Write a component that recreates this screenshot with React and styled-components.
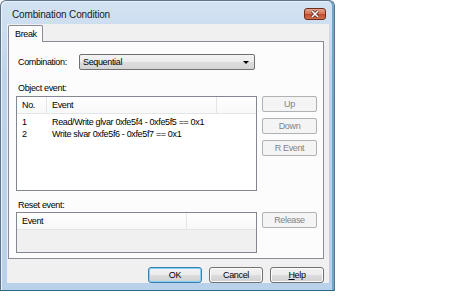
import styled, { createGlobalStyle } from "styled-components";

const GlobalStyle = createGlobalStyle`
  body {
    margin: 0;
    background: #ffffff;
    font-family: "Liberation Sans", Arial, sans-serif;
    font-size: 9px;
    letter-spacing: -0.35px;
    color: #000000;
  }
`;

export default function App() {
  return (
    <>
      <GlobalStyle />
      <Window>
        <TitleBar>
          <Title>Combination Condition</Title>
          <CloseButton>
            <svg width="10" height="8" viewBox="0 0 10 8">
              <path d="M2 1 L8 7 M8 1 L2 7" stroke="#5a2316" strokeWidth="3" />
              <path d="M2 1 L8 7 M8 1 L2 7" stroke="#ffffff" strokeWidth="1.6" />
            </svg>
          </CloseButton>
        </TitleBar>
        <Client>
          <TabStrip>
            <Tab>Break</Tab>
          </TabStrip>
          <Panel>
            <ComboRow>
              <Label>Combination:</Label>
              <Select>
                <span>Sequential</span>
                <Arrow />
              </Select>
            </ComboRow>
            <Caption>Object event:</Caption>
            <ListRow>
              <ListView height={95}>
                <Header>
                  <HeadCell width={30}>No.</HeadCell>
                  <HeadCell width={170}>Event</HeadCell>
                  <HeadFill />
                </Header>
                <Rows>
                  <Row>
                    <Cell width={30}>1</Cell>
                    <Cell>Read/Write glvar 0xfe5f4 - 0xfe5f5 == 0x1</Cell>
                  </Row>
                  <Row>
                    <Cell width={30}>2</Cell>
                    <Cell>Write slvar 0xfe5f6 - 0xfe5f7 == 0x1</Cell>
                  </Row>
                </Rows>
              </ListView>
              <ButtonCol>
                <SideButton>Up</SideButton>
                <SideButton>Down</SideButton>
                <SideButton>R Event</SideButton>
              </ButtonCol>
            </ListRow>
            <Caption $reset>Reset event:</Caption>
            <ListRow>
              <ListView height={41} $disabled>
                <Header>
                  <HeadCell width={170}>Event</HeadCell>
                  <HeadFill />
                </Header>
              </ListView>
              <ButtonCol>
                <SideButton>Release</SideButton>
              </ButtonCol>
            </ListRow>
          </Panel>
          <Footer>
            <DialogButton $default>OK</DialogButton>
            <DialogButton>Cancel</DialogButton>
            <DialogButton>
              <u>H</u>elp
            </DialogButton>
          </Footer>
        </Client>
      </Window>
    </>
  );
}

const Window = styled.div`
  width: 335px;
  height: 291px;
  box-sizing: border-box;
  border: 1px solid #5d7489;
  border-bottom-color: #2e6a88;
  border-radius: 6px 6px 0 0;
  background: linear-gradient(#d4e3f3, #bfd4eb 25%, #b9d1ea 100%);
  box-shadow: inset -2px 0 0 #6fa8cc, inset 1px 1px 0 #e9f1fa;
  padding: 0 5px 7px 6px;
  display: flex;
  flex-direction: column;
`;

const TitleBar = styled.div`
  height: 23px;
  display: flex;
  justify-content: space-between;
  align-items: flex-start;
`;

const Title = styled.div`
  font-size: 10px;
  letter-spacing: -0.15px;
  color: #1a1a1a;
  margin: 8px 0 0 5px;
  line-height: 12px;
`;

const CloseButton = styled.div`
  width: 22px;
  height: 12px;
  box-sizing: border-box;
  margin: 7px 3px 0 0;
  border: 1px solid #6e2c1d;
  border-radius: 3px;
  background: linear-gradient(#e3a58f, #d47458 45%, #c24b2c 55%, #d0704f);
  display: flex;
  align-items: center;
  justify-content: center;
`;

const Client = styled.div`
  flex: 1;
  background: #f0f0f0;
  padding: 1px 5px 0 1px;
  display: flex;
  flex-direction: column;
`;

const TabStrip = styled.div`
  height: 16px;
  display: flex;
  position: relative;
  z-index: 1;
`;

const Tab = styled.div`
  width: 35px;
  height: 17px;
  box-sizing: border-box;
  border: 1px solid #898c95;
  border-bottom: none;
  border-radius: 2px 2px 0 0;
  background: #fcfcfc;
  padding: 2px 0 0 6px;
  line-height: 12px;
`;

const Panel = styled.div`
  height: 218px;
  box-sizing: border-box;
  border: 1px solid #898c95;
  background: #fcfcfc;
  padding: 12px 6px 0 7px;
  display: flex;
  flex-direction: column;
`;

const ComboRow = styled.div`
  display: flex;
  align-items: center;
  width: 241px;
`;

const Label = styled.span`
  width: 63px;
  padding-left: 2px;
  box-sizing: border-box;
`;

const Select = styled.div`
  width: 176px;
  height: 16px;
  box-sizing: border-box;
  border: 1px solid #707070;
  border-radius: 2px;
  background: linear-gradient(#f3f3f3, #ebebeb 50%, #dddddd 51%, #d4d4d4);
  display: flex;
  align-items: center;
  justify-content: space-between;
  padding: 0 5px 0 3px;
`;

const Arrow = styled.span`
  width: 0;
  height: 0;
  border-left: 3px solid transparent;
  border-right: 3px solid transparent;
  border-top: 3px solid #000;
`;

const Caption = styled.div`
  line-height: 12px;
  margin-top: ${(p) => (p.$reset ? "8px" : "12px")};
  margin-bottom: ${(p) => (p.$reset ? "1px" : "2px")};
  padding-left: 2px;
`;

const ListRow = styled.div`
  display: flex;
  gap: 5px;
  align-items: flex-start;
`;

const ListView = styled.div`
  width: 241px;
  height: ${(p) => p.height}px;
  box-sizing: border-box;
  border: 1px solid #828790;
  background: ${(p) => (p.$disabled ? "#f0f0f0" : "#ffffff")};
  display: flex;
  flex-direction: column;
`;

const Header = styled.div`
  height: 16px;
  display: flex;
  background: linear-gradient(#ffffff, #f7f8f9);
  border-bottom: 1px solid #e5e5e5;
`;

const HeadCell = styled.div`
  width: ${(p) => p.width}px;
  box-sizing: border-box;
  border-right: 1px solid #e3e5e7;
  padding-left: 5px;
  line-height: 16px;
`;

const HeadFill = styled.div`
  flex: 1;
`;

const Rows = styled.div`
  padding-top: 2px;
`;

const Row = styled.div`
  display: flex;
  line-height: 12px;
`;

const Cell = styled.div`
  width: ${(p) => (p.width ? `${p.width}px` : "auto")};
  box-sizing: border-box;
  padding-left: 5px;
  white-space: nowrap;
`;

const ButtonCol = styled.div`
  display: flex;
  flex-direction: column;
  gap: 6px;
`;

const SideButton = styled.div`
  width: 55px;
  height: 16px;
  box-sizing: border-box;
  border: 1px solid #adb2b5;
  border-radius: 2px;
  background: #f4f4f4;
  color: #838383;
  text-align: center;
  line-height: 14px;
`;

const Footer = styled.div`
  display: flex;
  justify-content: flex-end;
  gap: 7px;
  margin-top: 8px;
`;

const DialogButton = styled.div`
  width: 54px;
  height: 16px;
  box-sizing: border-box;
  border: 1px solid ${(p) => (p.$default ? "#3c7fb1" : "#707070")};
  border-radius: 3px;
  background: linear-gradient(#f2f2f2, #ebebeb 50%, #dddddd 51%, #cfcfcf);
  box-shadow: inset 0 0 0 1px ${(p) => (p.$default ? "#7fd1f6" : "#fcfcfc")};
  text-align: center;
  line-height: 14px;
`;
